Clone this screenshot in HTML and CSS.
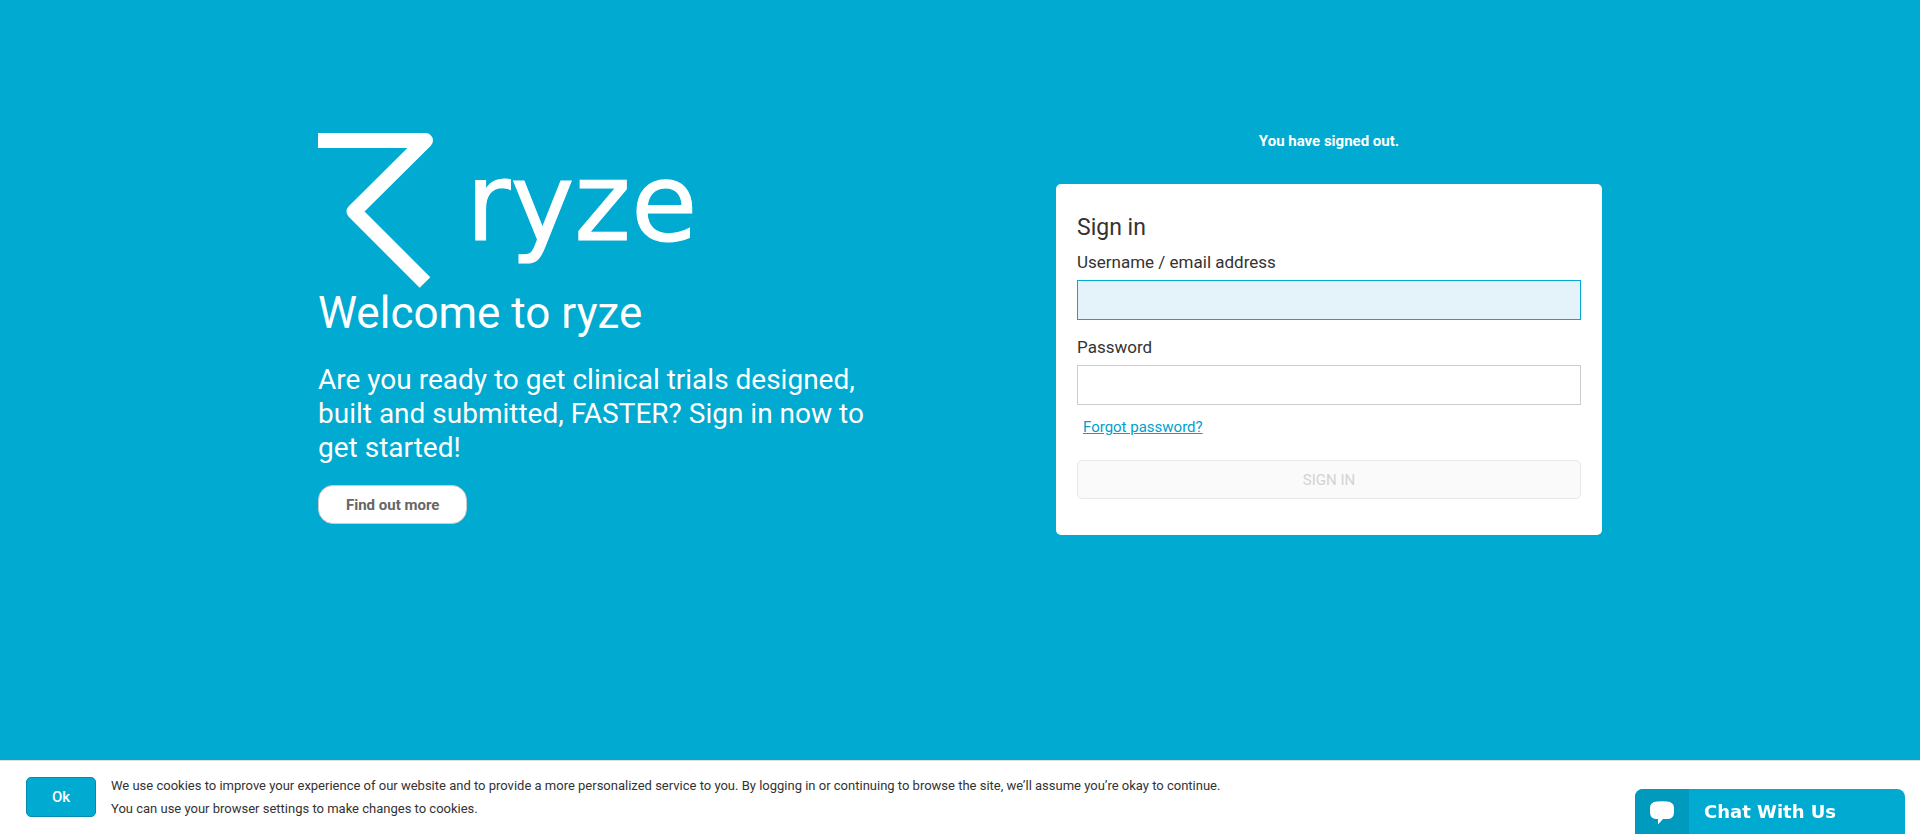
FILE: index.html
```html
<!DOCTYPE html>
<html lang="en">
<head>
<meta charset="utf-8">
<meta name="viewport" content="width=device-width, initial-scale=1">
<title>Sign in - ryze</title>
<link rel="stylesheet" href="styles.css">
</head>
<body>
<main class="page">
  <section class="intro">
    <div class="logo">
      <svg class="logo-mark" viewBox="0 0 116 156" aria-hidden="true">
        <path d="M0 7.5H107.5L36 78.5L107 149.5" fill="none" stroke="#fff" stroke-width="15" stroke-linejoin="round"/>
      </svg>
      <span class="logo-name">ryze</span>
    </div>
    <h1 class="welcome">Welcome to ryze</h1>
    <p class="lead">Are you ready to get clinical trials designed, built and submitted, FASTER? Sign in now to get started!</p>
    <button class="more" type="button">Find out more</button>
  </section>
  <section class="access">
    <p class="message">You have signed out.</p>
    <form class="card">
      <h2 class="card-title">Sign in</h2>
      <label class="label" for="username">Username / email address</label>
      <input class="field field-active" id="username" type="text">
      <label class="label" for="password">Password</label>
      <input class="field" id="password" type="password">
      <a class="forgot" href="#">Forgot password?</a>
      <button class="submit" type="submit" disabled>SIGN IN</button>
    </form>
  </section>
</main>
<footer class="cookies">
  <button class="ok" type="button">Ok</button>
  <p class="cookie-text">We use cookies to improve your experience of our website and to provide a more personalized service to you. By logging in or continuing to browse the site, we’ll assume you’re okay to continue.<br>You can use your browser settings to make changes to cookies.</p>
</footer>
<button class="chat" type="button">
  <span class="chat-icon">
    <svg width="24" height="24" viewBox="0 0 24 24" aria-hidden="true">
      <path d="M7 0.5Q12 0 17 0.5Q24 1 24 7V11Q24 17.5 18 18H13L8 23.5V18H6Q0 17.5 0 11V7Q0 1 7 0.5Z" fill="#fff"/>
    </svg>
  </span>
  <span class="chat-label">Chat With Us</span>
</button>
</body>
</html>
```
FILE: styles.css
```css
* {
  box-sizing: border-box;
}

body {
  margin: 0;
  min-height: 100vh;
  display: flex;
  flex-direction: column;
  background: #00aad0;
  color: #333;
  font-family: Roboto, "Liberation Sans", sans-serif;
}

h1, h2, p {
  margin: 0;
  font-weight: 400;
}

button, input {
  font-family: inherit;
}

.page {
  flex: 1;
  width: 100%;
  max-width: 1324px;
  margin: 0 auto;
  padding: 133px 20px 40px;
  display: grid;
  grid-template-columns: minmax(0, 546px) minmax(0, 546px);
  justify-content: space-between;
  align-items: start;
}

.intro {
  color: #fff;
}

.logo {
  display: flex;
  align-items: flex-start;
  gap: 32px;
}

.logo-mark {
  width: 116px;
  height: 156px;
}

.logo-name {
  padding-top: 10px;
  font: 108px/120px "DejaVu Sans", sans-serif;
  -webkit-text-stroke: 1px #fff;
}

.welcome {
  font-size: 44px;
  line-height: 48px;
}

.lead {
  margin-top: 26px;
  font-size: 28px;
  line-height: 34px;
}

.more {
  margin-top: 20px;
  height: 39px;
  padding: 0 27px;
  border: 1px solid #ccc;
  border-radius: 15px;
  background: #fff;
  color: #666;
  font-size: 15px;
  font-weight: 700;
}

.message {
  color: #fff;
  font-size: 15px;
  font-weight: 700;
  line-height: 17px;
  text-align: center;
}

.card {
  margin-top: 34px;
  padding: 29px 21px 36px;
  display: flex;
  flex-direction: column;
  border-radius: 5px;
  background: #fff;
}

.card-title {
  font-size: 23px;
  line-height: 30px;
}

.label {
  margin-top: 7px;
  font-size: 17px;
  line-height: 24px;
}

.field {
  height: 40px;
  margin: 6px 0 8px;
  padding: 0 10px;
  border: 1px solid #ccc;
  font-size: 17px;
}

.field-active {
  border-color: #00aad0;
  background: #e4f3f9;
}

.forgot {
  align-self: flex-start;
  margin: 4px 6px 0;
  color: #00a0cc;
  font-size: 15px;
  line-height: 20px;
}

.submit {
  height: 39px;
  margin-top: 23px;
  border: 1px solid #e8e8e8;
  border-radius: 5px;
  background: #fafafa;
  color: #d3d3d3;
  font-size: 15px;
}

.cookies {
  display: flex;
  align-items: center;
  gap: 15px;
  padding: 13px 26px 14px;
  border-top: 1px solid #ddd;
  background: #fff;
}

.ok {
  width: 70px;
  height: 40px;
  flex: none;
  border: 1px solid #008cb0;
  border-radius: 5px;
  background: #00aad0;
  color: #fff;
  font-size: 15px;
  font-weight: 500;
}

.cookie-text {
  font-size: 13px;
  line-height: 23px;
}

.chat {
  position: fixed;
  right: 15px;
  bottom: 0;
  width: 270px;
  height: 45px;
  padding: 0;
  display: flex;
  border: 0;
  border-radius: 8px 8px 0 0;
  overflow: hidden;
  background: #00aad0;
  color: #fff;
}

.chat-icon {
  width: 54px;
  height: 45px;
  padding-top: 3px;
  display: flex;
  align-items: center;
  justify-content: center;
  background: #009abe;
}

.chat-label {
  padding-left: 15px;
  font: 700 18px/45px "DejaVu Sans", sans-serif;
}
```
